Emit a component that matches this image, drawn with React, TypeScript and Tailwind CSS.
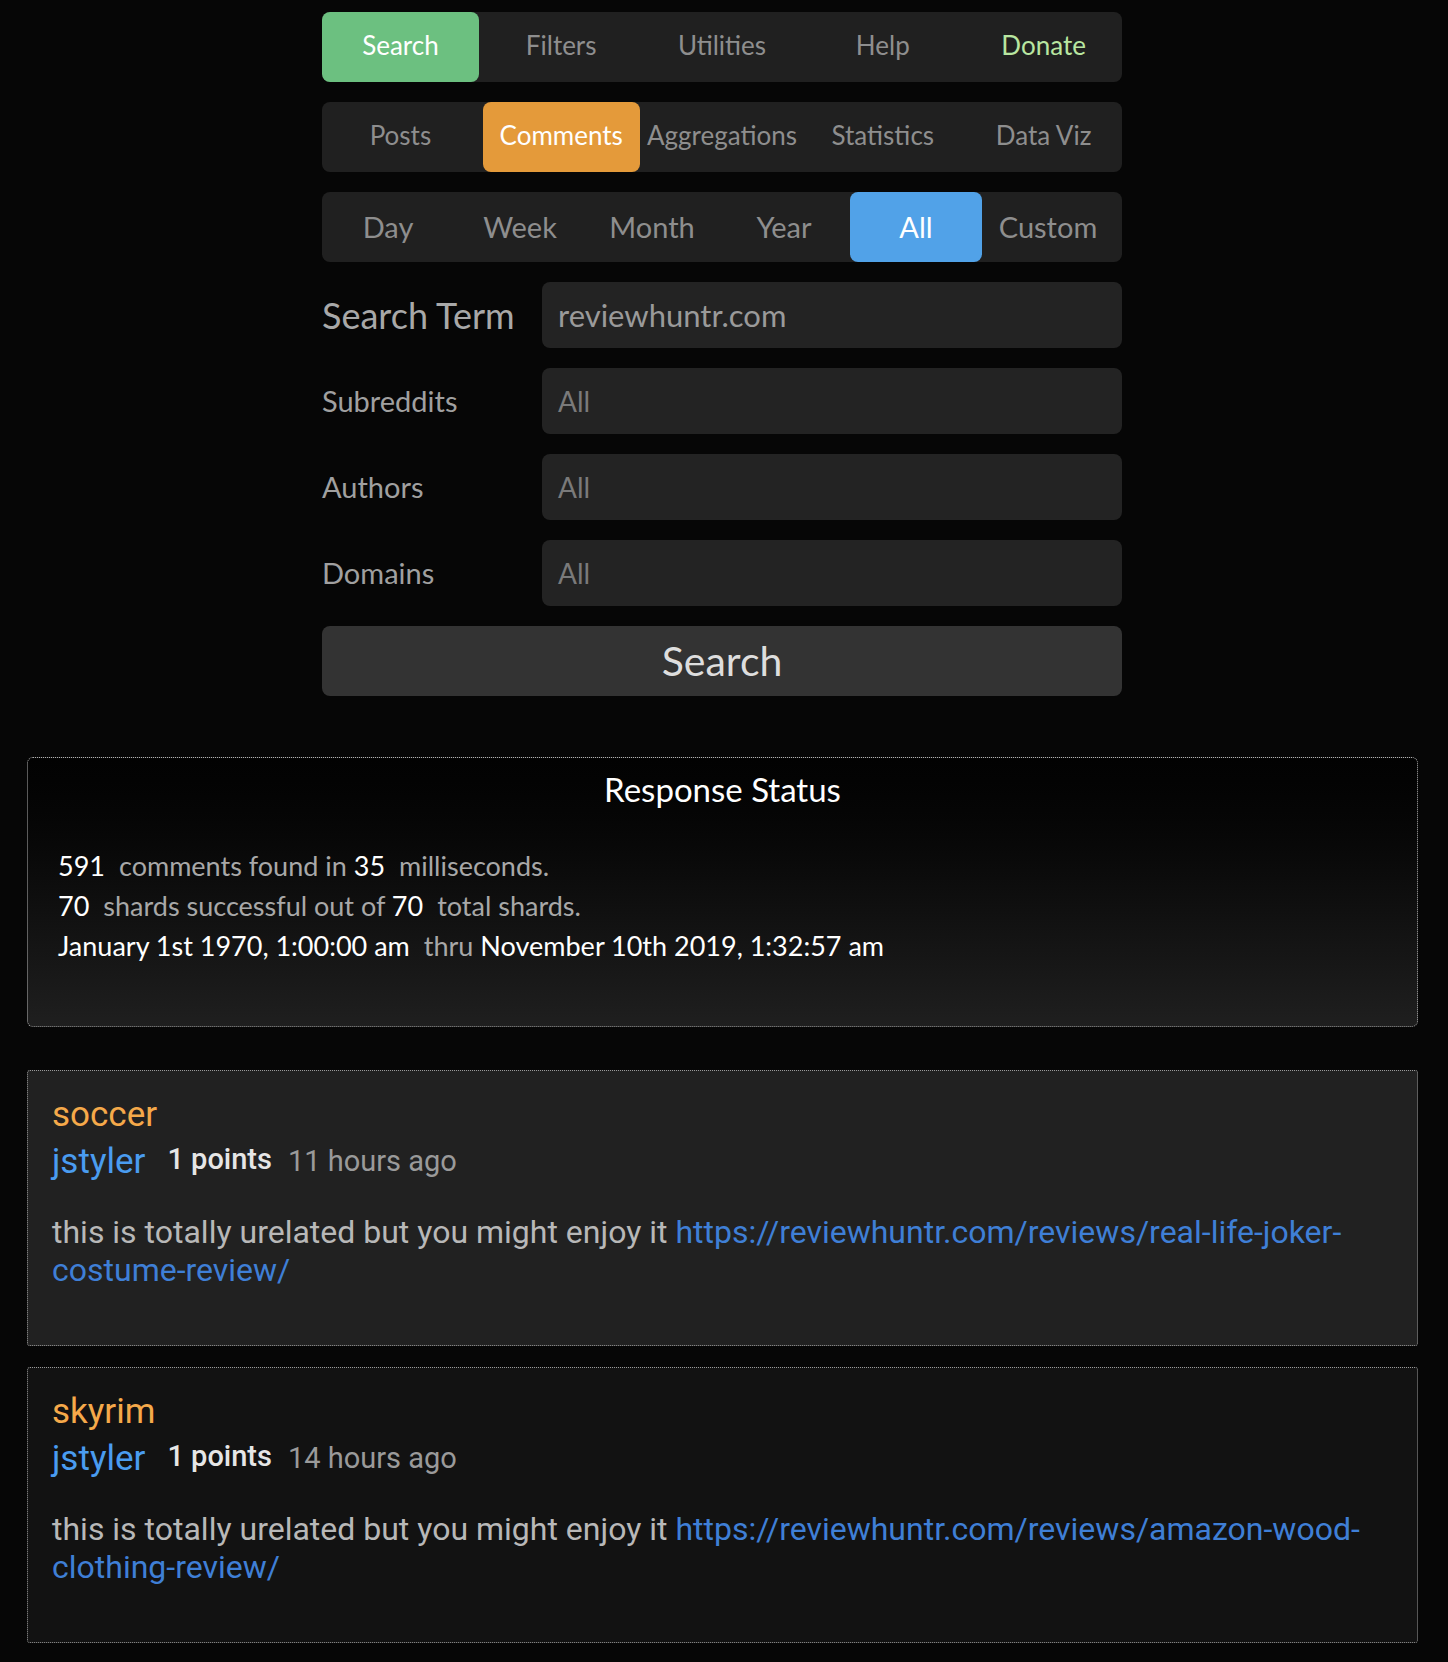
import React from "react";

const lato = { fontFamily: "Lato, 'Open Sans', sans-serif" };
const roboto = { fontFamily: "Roboto, 'Noto Sans', sans-serif" };

function Tab({ label, active, activeClass, textClass, lift = true }: { label: string; active?: boolean; activeClass?: string; textClass?: string; lift?: boolean }) {
  return (
    <div
      className={`flex items-center justify-center rounded-lg ${lift ? "pb-[3px]" : ""} ${active ? activeClass + " text-white" : textClass ?? "text-[#8e8e8e]"}`}
    >
      {label}
    </div>
  );
}

function FieldRow({ label, value, big, valueClass }: { label: string; value: string; big?: boolean; valueClass?: string }) {
  return (
    <div className="mt-[20px] flex items-center">
      <div className={`w-[220px] shrink-0 ${big ? "text-[36px] text-[#a8a8a8]" : "text-[29px] text-[#a0a0a0]"}`}>{label}</div>
      <div className={`flex h-[66px] flex-1 items-center rounded-lg bg-[#232323] px-4 ${valueClass ?? "text-[28px] text-[#7a7a7a]"}`}>
        {value}
      </div>
    </div>
  );
}

function Comment({ sub, time, link1, link2, bg }: { sub: string; time: string; link1: string; link2: string; bg: string }) {
  return (
    <div className={`ml-[27px] mr-[30px] rounded-[3px] border border-dotted border-[#9a9a9a] ${bg} px-[24px] pt-[25px] pb-[56px]`} style={roboto}>
      <div className="text-[35px] leading-[38px] text-[#f5a94a]">{sub}</div>
      <div className="mt-[8px] flex h-[40px] items-center">
        <span className="text-[35px] text-[#4a9cf0]">jstyler</span>
        <span className="ml-[22px] -mt-[4px] text-[29px] font-medium text-[#e6e6e6]">1 points</span>
        <span className="ml-[16px] text-[29px] text-[#9a9a9a]">{time}</span>
      </div>
      <div className="mt-[31px] text-[32px] leading-[38px] text-[#b8b8b8]">
        this is totally urelated but you might enjoy it{" "}
        <span className="text-[#3f7fd6]">
          {link1}
          <br />
          {link2}
        </span>
      </div>
    </div>
  );
}

export default function App() {
  return (
    <div className="min-h-[1662px] w-full bg-[#060606] pb-[20px]">
      <div className="ml-[322px] w-[800px] pt-[12px]" style={lato}>
        <div className="grid h-[70px] grid-cols-5 gap-1 rounded-lg bg-[#202020] text-[26px]">
          <Tab label="Search" active activeClass="bg-[#6cc080]" />
          <Tab label="Filters" />
          <Tab label="Utilities" />
          <Tab label="Help" />
          <Tab label="Donate" textClass="text-[#b8e6a0]" />
        </div>
        <div className="mt-[20px] grid h-[70px] grid-cols-5 gap-1 rounded-lg bg-[#202020] text-[26px]">
          <Tab label="Posts" />
          <Tab label="Comments" active activeClass="bg-[#e49a3a]" />
          <Tab label="Aggregations" />
          <Tab label="Statistics" />
          <Tab label="Data Viz" />
        </div>
        <div className="mt-[20px] grid h-[70px] grid-cols-[repeat(6,132px)] rounded-lg bg-[#202020] text-[29px]">
          <Tab label="Day" lift={false} />
          <Tab label="Week" lift={false} />
          <Tab label="Month" lift={false} />
          <Tab label="Year" lift={false} />
          <Tab label="All" active activeClass="bg-[#51a2e8]" lift={false} />
          <Tab label="Custom" lift={false} />
        </div>
        <FieldRow label="Search Term" value="reviewhuntr.com" big valueClass="text-[31px] text-[#9a9a9a]" />
        <FieldRow label="Subreddits" value="All" />
        <FieldRow label="Authors" value="All" />
        <FieldRow label="Domains" value="All" />
        <div className="mt-[20px] flex h-[70px] items-center justify-center rounded-lg bg-[#333333] text-[41px] text-[#dedede]">
          Search
        </div>
      </div>

      <div
        className="ml-[27px] mr-[30px] mt-[61px] rounded-md border border-dotted border-[#b0b0b0] bg-gradient-to-b from-[#020202] to-[#1f1f1f] pt-[11px] pb-[60px] pl-[30px]"
        style={lato}
      >
        <div className="-ml-[30px] text-center text-[33px] leading-[40px] text-white">Response Status</div>
        <div className="mt-[37px] text-[27px] leading-[40px] text-[#a8a8a8]">
          <div>
            <span className="mr-[14px] text-white">591</span>comments found in <span className="mr-[14px] text-white">35</span>milliseconds.
          </div>
          <div>
            <span className="mr-[14px] text-white">70</span>shards successful out of <span className="mr-[14px] text-white">70</span>total shards.
          </div>
          <div>
            <span className="mr-[14px] text-white">January 1st 1970, 1:00:00 am</span>thru{" "}
            <span className="text-white">November 10th 2019, 1:32:57 am</span>
          </div>
        </div>
      </div>

      <div className="mt-[43px]">
        <Comment
          sub="soccer"
          time="11 hours ago"
          link1="https://reviewhuntr.com/reviews/real-life-joker-"
          link2="costume-review/"
          bg="bg-[#212121]"
        />
      </div>
      <div className="mt-[21px]">
        <Comment
          sub="skyrim"
          time="14 hours ago"
          link1="https://reviewhuntr.com/reviews/amazon-wood-"
          link2="clothing-review/"
          bg="bg-[#121212]"
        />
      </div>
    </div>
  );
}
